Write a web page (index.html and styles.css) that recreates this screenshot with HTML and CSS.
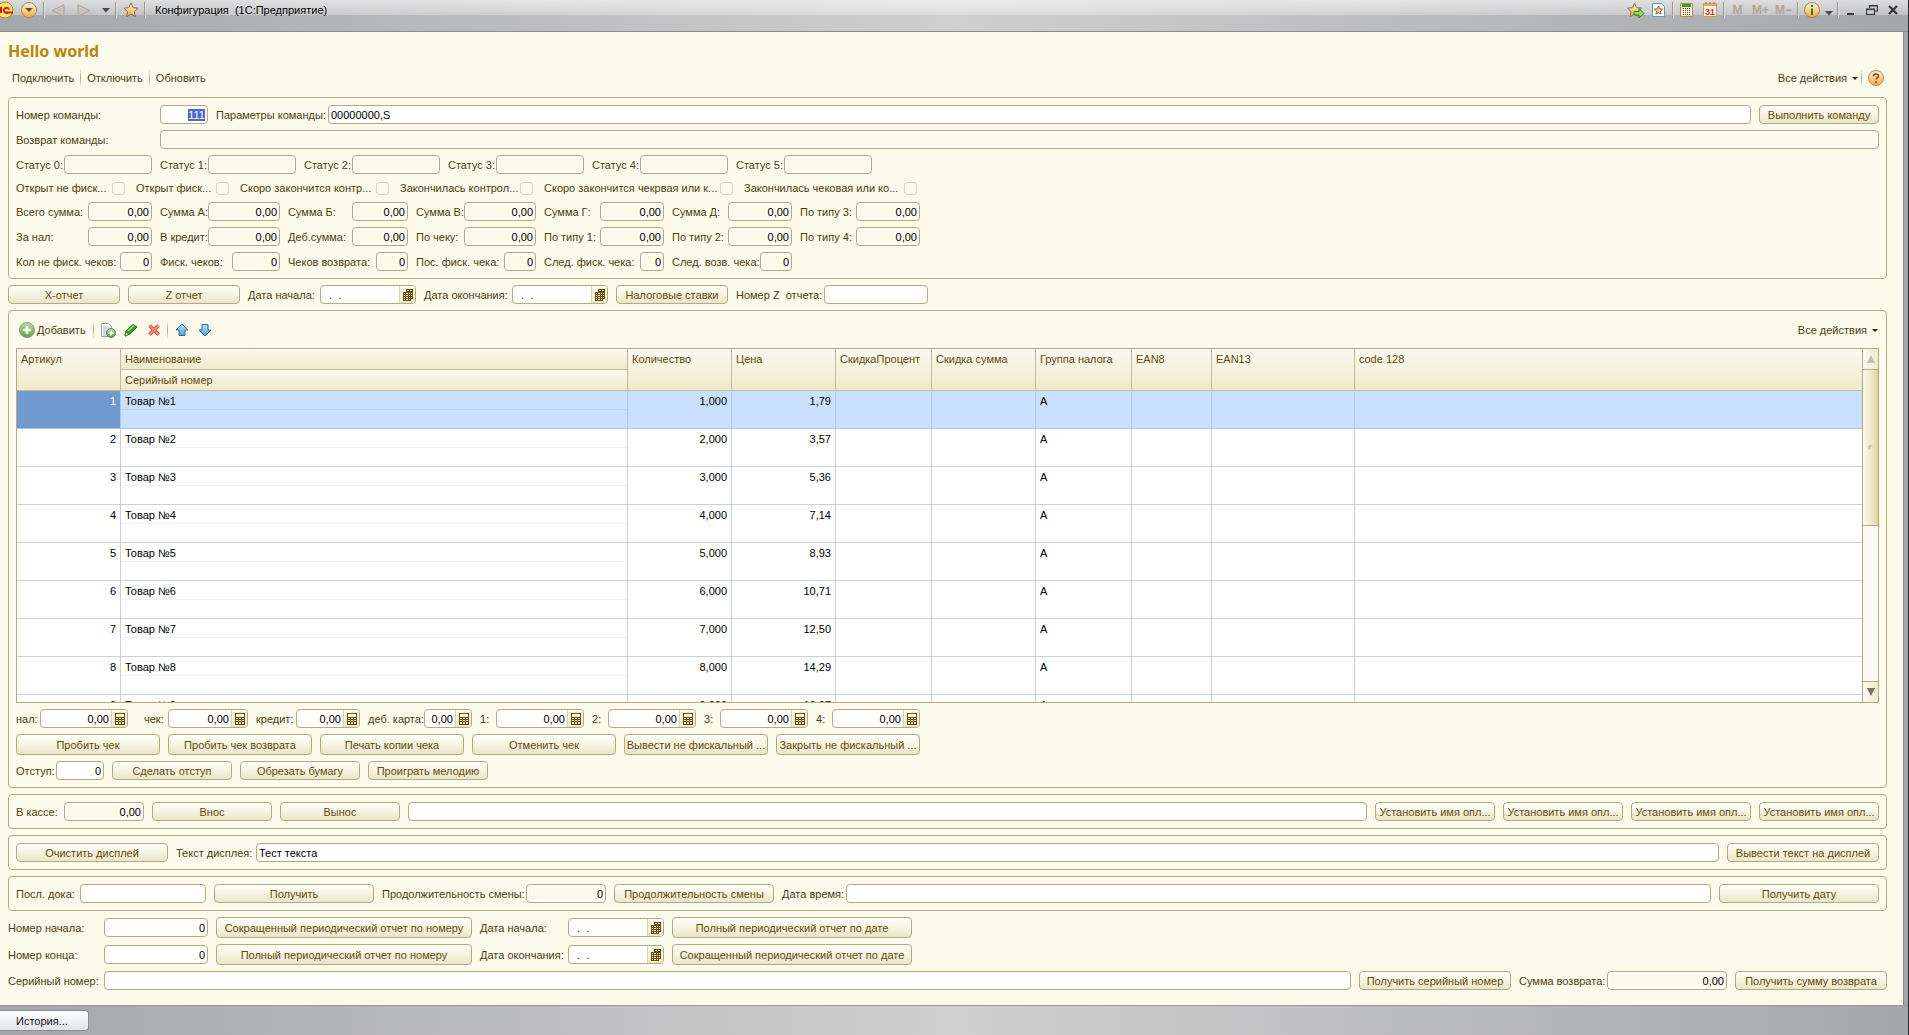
FILE: index.html
```
<!DOCTYPE html>
<html lang="ru">
<head>
<meta charset="utf-8">
<title>Конфигурация (1С:Предприятие)</title>
<link rel="stylesheet" href="styles.css">
</head>
<body>
<svg class="defs" aria-hidden="true">
  <defs>
    <linearGradient id="gold" x1="0" y1="0" x2="0" y2="1"><stop offset="0" stop-color="#fff3dc"/><stop offset=".5" stop-color="#fbd08a"/><stop offset="1" stop-color="#f3a63c"/></linearGradient>
    <linearGradient id="green" x1="0" y1="0" x2="0" y2="1"><stop offset="0" stop-color="#b9dcab"/><stop offset="1" stop-color="#5ea04a"/></linearGradient>
    <linearGradient id="blue" x1="0" y1="0" x2="0" y2="1"><stop offset="0" stop-color="#b8e0fa"/><stop offset="1" stop-color="#4fa3e0"/></linearGradient>
    <symbol id="i-star" viewBox="0 0 16 16"><path d="M8 1l2.100 4.600 5 .6-3.700 3.400 1 5L8 12.200l-4.400 2.400 1-5L.9 6.200l5-.6z" fill="url(#gold)" stroke="#8a7552"/></symbol>
    <symbol id="i-dates" viewBox="0 0 10 12"><path d="M3 0h7v10H8v2H0V3h3z" fill="#6a500a"/><path d="M1 4h1v1H1zM3 4h2v1H3zM6 4h1v1H6zM1 6h1v1H1zM3 6h2v1H3zM6 6h1v1H6zM1 8h1v1H1zM3 8h2v1H3zM6 8h1v1H6zM1 10h1v1H1zM3 10h2v1H3zM6 10h1v1H6zM4 1h2v1H4zM7 1h2v1H7zM8 4h1v1H8zM8 6h1v1H8zM8 8h1v1H8z" fill="#f7f1d6"/></symbol>
    <symbol id="i-calc" viewBox="0 0 10 12"><path d="M0 0h10v12H0z" fill="#6a500a"/><path d="M1 1h8v3H1zM1 5h2v1H1zM4 5h2v1H4zM7 5h2v1H7zM1 7h2v1H1zM4 7h2v1H4zM7 7h2v1H7zM1 9h2v2H1zM4 9h2v2H4zM7 9h2v2H7z" fill="#f7f1d6"/></symbol>
  </defs>
</svg>

<header class="titlebar">
  <button class="tb-btn logo" aria-label="Главное меню"><svg width="14" height="18" viewBox="0 0 14 18"><circle cx="5" cy="9" r="8" fill="#ffe566" stroke="#a8863a"/><path d="M1 6v6M5 11.500H13M9 8.500A2.600 2.600 0 1 0 8.500 11" stroke="#d81a10" stroke-width="2" fill="none"/></svg></button>
  <button class="tb-btn drop" aria-label="Меню"><svg width="16" height="16" viewBox="0 0 16 16"><circle cx="8" cy="8" r="7.500" fill="url(#gold)" stroke="#a58a60"/><path d="M4 6h8l-4 4z" fill="#5e5348"/></svg></button>
  <span class="tb-sep"></span>
  <button class="tb-btn nav" aria-label="Назад"><svg width="14" height="13" viewBox="0 0 14 13"><path d="M13 .8v11.400L1 6.500z" fill="#cac4bc" stroke="#aaa59f"/></svg></button>
  <button class="tb-btn nav" aria-label="Вперед"><svg width="14" height="13" viewBox="0 0 14 13"><path d="M1 .8v11.400l12-5.700z" fill="#cac4bc" stroke="#aaa59f"/></svg></button>
  <button class="tb-btn hist" aria-label="Список переходов"><svg width="8" height="5" viewBox="0 0 8 5"><path d="M0 0h8L4 4.500z" fill="#4a4a4e"/></svg></button>
  <span class="tb-sep"></span>
  <button class="tb-btn fav" aria-label="Избранное"><svg width="16" height="16"><use href="#i-star"/></svg></button>
  <span class="tb-sep"></span>
  <span class="tb-title">Конфигурация&nbsp; (1С:Предприятие)</span>
  <div class="tb-right">
    <button class="tb-btn" aria-label="Добавить в избранное"><svg width="18" height="17" viewBox="0 0 18 17"><path d="M7.500 1l2 4.600 5 .6-3.700 3.400 1 5-4.300-2.400-4.400 2.400 1-5L.6 6.200l5-.6z" fill="url(#gold)" stroke="#8a7552"/><path d="M7 9.500h5v-3l5 5-5 4.500v-3H7z" fill="#8fdc5c" stroke="#2f8420"/></svg></button>
    <button class="tb-btn" aria-label="Страница избранного"><svg width="13" height="16" viewBox="0 0 13 16"><path d="M.5 1.500h9l3 3v10H.5z" fill="#fff" stroke="#6f92b8"/><path d="M6.500 4l1.300 2.700 2.900.4-2.100 2 .5 3-2.600-1.400-2.600 1.400.5-3-2.100-2 2.900-.4z" fill="#f5bd66" stroke="#5b5b55" stroke-width=".8"/></svg></button>
    <span class="tb-sep"></span>
    <button class="tb-btn" aria-label="Калькулятор"><svg width="13" height="16" viewBox="0 0 13 16"><path d="M.5 1.500h12v13H.5z" fill="#fdf0cf" stroke="#b78a4c"/><path d="M2 2h9v3H2z" fill="#3f9a35"/><path d="M3 6h1v1H3zM5 6h1v1H5zM7 6h1v1H7zM9 6h1v1H9zM3 8h1v1H3zM5 8h1v1H5zM7 8h1v1H7zM9 8h1v1H9zM3 10h1v1H3zM5 10h1v1H5zM7 10h1v1H7zM9 10h1v1H9zM3 12h1v1H3zM5 12h1v1H5zM7 12h1v1H7z" fill="#5e5138"/><path d="M9 12h1v1H9z" fill="#d83020"/></svg></button>
    <button class="tb-btn" aria-label="Календарь"><svg width="14" height="16" viewBox="0 0 14 16"><path d="M.5 1.500h13v13H.5z" fill="#fff4e4" stroke="#c79a62"/><path d="M1 1h12v3H1z" fill="#eda765"/><path d="M3 0v2M7 0v2M11 0v2" stroke="#8b5a2b"/><text x="7" y="13" text-anchor="middle" class="cal-num">31</text></svg></button>
    <span class="tb-sep"></span>
    <button class="tb-btn mem">M</button>
    <button class="tb-btn mem">M+</button>
    <button class="tb-btn mem">M−</button>
    <span class="tb-sep"></span>
    <button class="tb-btn" aria-label="О программе"><svg width="16" height="16" viewBox="0 0 16 16"><circle cx="8" cy="8" r="7.500" fill="url(#gold)" stroke="#9a8058"/><path d="M7 3h2v2H7zM7 6.500h2V13H7z" fill="#2f7d23"/></svg></button>
    <button class="tb-btn low" aria-label="Еще"><svg width="8" height="5" viewBox="0 0 8 5"><path d="M0 0h8L4 4.500z" fill="#4a4a4e"/></svg></button>
    <span class="tb-sep"></span>
    <button class="tb-btn win" aria-label="Свернуть"><svg width="12" height="12" viewBox="0 0 12 12"><path d="M2 9h7v2H2z" fill="#38383a"/></svg></button>
    <button class="tb-btn win" aria-label="Восстановить"><svg width="12" height="12" viewBox="0 0 12 12"><path d="M3.500 4V1.500h8v5.500H9M.5 5h8v5.500h-8zM3 2h9M0 5.500h9" fill="none" stroke="#38383a" stroke-width="1.200"/></svg></button>
    <button class="tb-btn win" aria-label="Закрыть"><svg width="12" height="12" viewBox="0 0 12 12"><path d="M2 2l8 8M10 2l-8 8" stroke="#333" stroke-width="2.200"/></svg></button>
  </div>
</header>

<main class="page">
  <h1>Hello world</h1>
  <nav class="menu">
    <button class="link">Подключить</button><span class="sep"></span>
    <button class="link">Отключить</button><span class="sep"></span>
    <button class="link">Обновить</button>
    <div class="menu-right">
      <button class="link">Все действия <span class="caret"></span></button><span class="sep"></span>
      <button class="link help" aria-label="Справка"><svg width="16" height="16" viewBox="0 0 16 16"><circle cx="8" cy="8" r="7.500" fill="url(#gold)" stroke="#a58a60"/><path d="M5.500 6.500C5.500 3 10.500 3.200 10.500 6c0 1.600-2.500 1.600-2.500 3.500M8 11v2" stroke="#7a4a1c" stroke-width="1.500" fill="none"/></svg></button>
    </div>
  </nav>

  <section class="box">
    <div class="row">
      <label class="field"><span class="c144">Номер команды:</span><input id="cmd" class="w48 num" value="111"></label>
      <label class="field grow"><span class="c112">Параметры команды:</span><input class="fill" value="00000000,S"></label>
      <button class="btn w120">Выполнить команду</button>
    </div>
    <div class="row">
      <label class="field grow"><span class="c144">Возврат команды:</span><input class="fill" readonly></label>
    </div>
    <div class="row">
      <label class="field"><span class="c48">Статус 0:</span><input class="w88" readonly></label>
      <label class="field"><span class="c48">Статус 1:</span><input class="w88" readonly></label>
      <label class="field"><span class="c48">Статус 2:</span><input class="w88" readonly></label>
      <label class="field"><span class="c48">Статус 3:</span><input class="w88" readonly></label>
      <label class="field"><span class="c48">Статус 4:</span><input class="w88" readonly></label>
      <label class="field"><span class="c48">Статус 5:</span><input class="w88" readonly></label>
    </div>
    <div class="checks">
      <label>Открыт не фиск...<input type="checkbox" disabled></label>
      <label>Открыт фиск...<input type="checkbox" disabled></label>
      <label>Скоро закончится контр...<input type="checkbox" disabled></label>
      <label>Закончилась контрол...<input type="checkbox" disabled></label>
      <label>Скоро закончится чекрвая или к...<input type="checkbox" disabled></label>
      <label>Закончилась чековая или ко...<input type="checkbox" disabled></label>
    </div>
    <div class="sums">
      <label>Всего сумма:<input class="w64 num" value="0,00" readonly></label>
      <label>Сумма А:<input class="w72 num" value="0,00" readonly></label>
      <label>Сумма Б:<input class="w56 num" value="0,00" readonly></label>
      <label>Сумма В:<input class="w72 num" value="0,00" readonly></label>
      <label>Сумма Г:<input class="w64 num" value="0,00" readonly></label>
      <label>Сумма Д:<input class="w64 num" value="0,00" readonly></label>
      <label>По типу 3:<input class="w64 num" value="0,00" readonly></label>
      <label>За нал:<input class="w64 num" value="0,00" readonly></label>
      <label>В кредит:<input class="w72 num" value="0,00" readonly></label>
      <label>Деб.сумма:<input class="w56 num" value="0,00" readonly></label>
      <label>По чеку:<input class="w72 num" value="0,00" readonly></label>
      <label>По типу 1:<input class="w64 num" value="0,00" readonly></label>
      <label>По типу 2:<input class="w64 num" value="0,00" readonly></label>
      <label>По типу 4:<input class="w64 num" value="0,00" readonly></label>
      <label>Кол не фиск. чеков:<input class="w32 num" value="0" readonly></label>
      <label>Фиск. чеков:<input class="w48 num" value="0" readonly></label>
      <label>Чеков возврата:<input class="w32 num" value="0" readonly></label>
      <label>Пос. фиск. чека:<input class="w32 num" value="0" readonly></label>
      <label>След. фиск. чека:<input class="w24 num" value="0" readonly></label>
      <label>След. возв. чека:<input class="w32 num" value="0" readonly></label>
    </div>
  </section>

  <div class="row">
    <button class="btn w112">X-отчет</button>
    <button class="btn w112">Z отчет</button>
    <div class="field"><label class="c72" for="d1">Дата начала:</label><div class="combo w96"><input id="d1" value="  .  ."><button aria-label="Выбрать дату"><svg width="10" height="12"><use href="#i-dates"/></svg></button></div></div>
    <div class="field"><label class="c88" for="d2">Дата окончания:</label><div class="combo w96"><input id="d2" value="  .  ."><button aria-label="Выбрать дату"><svg width="10" height="12"><use href="#i-dates"/></svg></button></div></div>
    <button class="btn w112">Налоговые ставки</button>
    <label class="field"><span class="c88">Номер Z&nbsp; отчета:</span><input class="w104"></label>
  </div>

  <section class="box">
    <div class="toolbar">
      <button class="link add"><svg width="16" height="16" viewBox="0 0 16 16"><circle cx="8" cy="8" r="7.500" fill="url(#green)" stroke="#8a9a80"/><path d="M8 4v8M4 8h8" stroke="#fff" stroke-width="2.400"/></svg>Добавить</button>
      <span class="sep"></span>
      <button class="icon" aria-label="Скопировать"><svg width="16" height="16" viewBox="0 0 16 16"><path d="M1.500 1.500h7l3 3v10h-10z" fill="#fff" stroke="#8aa0b4"/><path d="M3 5h6M3 7h6M3 9h4M3 11h3M3 13h3" stroke="#9db3c8"/><circle cx="11" cy="11" r="4.500" fill="url(#green)" stroke="#5f8a50"/><path d="M11 8.500v5M8.500 11h5" stroke="#fff" stroke-width="1.600"/></svg></button>
      <button class="icon" aria-label="Изменить"><svg width="14" height="14" viewBox="0 0 14 14"><path d="M1 13l1-5L9 1.500l4 2.500-7 7z" fill="#2fa51a" stroke="#1d7a12"/><path d="M4 8l6-5.500" stroke="#8fe070" stroke-width="1.500"/><path d="M1 13l1-4 3 2.500z" fill="#e9dca0" stroke="#3b5a20" stroke-width=".6"/></svg></button>
      <button class="icon" aria-label="Удалить"><svg width="14" height="14" viewBox="0 0 14 14"><path d="M2.500 2.500l9 9M11.500 2.500l-9 9" stroke="#d4483a" stroke-width="3.600"/><path d="M2.500 2.500l9 9M11.500 2.500l-9 9" stroke="#f4897c" stroke-width="1.800"/></svg></button>
      <span class="sep"></span>
      <button class="icon" aria-label="Вверх"><svg width="14" height="14" viewBox="0 0 14 14"><path d="M7 1l6 6h-3v5.500H4V7H1z" fill="url(#blue)" stroke="#33688f"/></svg></button>
      <button class="icon" aria-label="Вниз"><svg width="14" height="14" viewBox="0 0 14 14"><path d="M7 13l6-6h-3V1.500H4V7H1z" fill="url(#blue)" stroke="#33688f"/></svg></button>
      <button class="link all">Все действия <span class="caret"></span></button>
    </div>

    <div class="list">
      <div class="list-view">
        <table>
          <colgroup><col class="k-w104"><col class="k-name"><col class="k-w104"><col class="k-w104"><col class="k-w96"><col class="k-w104"><col class="k-w96"><col class="k-w80"><col class="k-w143"><col></colgroup>
          <thead>
            <tr><th rowspan="2">Артикул</th><th>Наименование</th><th rowspan="2">Количество</th><th rowspan="2">Цена</th><th rowspan="2">СкидкаПроцент</th><th rowspan="2">Скидка сумма</th><th rowspan="2">Группа налога</th><th rowspan="2">EAN8</th><th rowspan="2">EAN13</th><th rowspan="2">code 128</th></tr>
            <tr><th>Серийный номер</th></tr>
          </thead>
          <tbody>
            <tr class="sel"><td>1</td><td><div>Товар №1</div></td><td>1,000</td><td>1,79</td><td></td><td></td><td>А</td><td></td><td></td><td></td></tr>
            <tr><td>2</td><td><div>Товар №2</div></td><td>2,000</td><td>3,57</td><td></td><td></td><td>А</td><td></td><td></td><td></td></tr>
            <tr><td>3</td><td><div>Товар №3</div></td><td>3,000</td><td>5,36</td><td></td><td></td><td>А</td><td></td><td></td><td></td></tr>
            <tr><td>4</td><td><div>Товар №4</div></td><td>4,000</td><td>7,14</td><td></td><td></td><td>А</td><td></td><td></td><td></td></tr>
            <tr><td>5</td><td><div>Товар №5</div></td><td>5,000</td><td>8,93</td><td></td><td></td><td>А</td><td></td><td></td><td></td></tr>
            <tr><td>6</td><td><div>Товар №6</div></td><td>6,000</td><td>10,71</td><td></td><td></td><td>А</td><td></td><td></td><td></td></tr>
            <tr><td>7</td><td><div>Товар №7</div></td><td>7,000</td><td>12,50</td><td></td><td></td><td>А</td><td></td><td></td><td></td></tr>
            <tr><td>8</td><td><div>Товар №8</div></td><td>8,000</td><td>14,29</td><td></td><td></td><td>А</td><td></td><td></td><td></td></tr>
            <tr><td>9</td><td><div>Товар №9</div></td><td>9,000</td><td>16,07</td><td></td><td></td><td>А</td><td></td><td></td><td></td></tr>
          </tbody>
        </table>
      </div>
      <div class="scroll">
        <button class="up" aria-label="Прокрутить вверх"><svg width="8" height="8" viewBox="0 0 8 8"><path d="M4 0l4 8H0z" fill="#c3bfb4"/></svg></button>
        <div class="thumb"><i></i></div>
        <div class="track"></div>
        <button class="down" aria-label="Прокрутить вниз"><svg width="8" height="8" viewBox="0 0 8 8"><path d="M4 8l4-8H0z" fill="#77736c"/></svg></button>
      </div>
    </div>

    <div class="row">
      <div class="field"><label class="c24" for="p1">нал:</label><div class="combo w88"><input id="p1" class="num" value="0,00"><button aria-label="Калькулятор"><svg width="10" height="12"><use href="#i-calc"/></svg></button></div></div>
      <div class="field lead"><label class="c24" for="p2">чек:</label><div class="combo w80"><input id="p2" class="num" value="0,00"><button aria-label="Калькулятор"><svg width="10" height="12"><use href="#i-calc"/></svg></button></div></div>
      <div class="field"><label class="c40" for="p3">кредит:</label><div class="combo w64"><input id="p3" class="num" value="0,00"><button aria-label="Калькулятор"><svg width="10" height="12"><use href="#i-calc"/></svg></button></div></div>
      <div class="field"><label class="c56" for="p4">деб. карта:</label><div class="combo w48"><input id="p4" class="num" value="0,00"><button aria-label="Калькулятор"><svg width="10" height="12"><use href="#i-calc"/></svg></button></div></div>
      <div class="field"><label class="c16" for="p5">1:</label><div class="combo w88"><input id="p5" class="num" value="0,00"><button aria-label="Калькулятор"><svg width="10" height="12"><use href="#i-calc"/></svg></button></div></div>
      <div class="field"><label class="c16" for="p6">2:</label><div class="combo w88"><input id="p6" class="num" value="0,00"><button aria-label="Калькулятор"><svg width="10" height="12"><use href="#i-calc"/></svg></button></div></div>
      <div class="field"><label class="c16" for="p7">3:</label><div class="combo w88"><input id="p7" class="num" value="0,00"><button aria-label="Калькулятор"><svg width="10" height="12"><use href="#i-calc"/></svg></button></div></div>
      <div class="field"><label class="c16" for="p8">4:</label><div class="combo w88"><input id="p8" class="num" value="0,00"><button aria-label="Калькулятор"><svg width="10" height="12"><use href="#i-calc"/></svg></button></div></div>
    </div>
    <div class="row tall">
      <button class="btn w144">Пробить чек</button>
      <button class="btn w144">Пробить чек возврата</button>
      <button class="btn w144">Печать копии чека</button>
      <button class="btn w144">Отменить чек</button>
      <button class="btn w144">Вывести не фискальный ...</button>
      <button class="btn w144">Закрыть не фискальный ...</button>
    </div>
    <div class="row">
      <label class="field"><span class="c40">Отступ:</span><input class="w48 num" value="0"></label>
      <button class="btn w120">Сделать отступ</button>
      <button class="btn w120">Обрезать бумагу</button>
      <button class="btn w120">Проиграть мелодию</button>
    </div>
  </section>

  <section class="box">
    <div class="row">
      <label class="field"><span class="c48">В кассе:</span><input class="w80 num" value="0,00" readonly></label>
      <button class="btn w120">Внос</button>
      <button class="btn w120">Вынос</button>
      <input class="fill" aria-label="Имя оплаты">
      <button class="btn w120">Установить имя опл...</button>
      <button class="btn w120">Установить имя опл...</button>
      <button class="btn w120">Установить имя опл...</button>
      <button class="btn w120">Установить имя опл...</button>
    </div>
  </section>

  <section class="box">
    <div class="row">
      <button class="btn w152">Очистить дисплей</button>
      <label class="field grow"><span class="c80">Текст дисплея:</span><input class="fill" value="Тест текста"></label>
      <button class="btn w152">Вывести текст на дисплей</button>
    </div>
  </section>

  <section class="box">
    <div class="row">
      <label class="field"><span class="c64">Посл. дока:</span><input class="w126"></label>
      <button class="btn w160">Получить</button>
      <label class="field"><span class="c144">Продолжительность смены:</span><input class="w80 num" value="0" readonly></label>
      <button class="btn w160">Продолжительность смены</button>
      <label class="field grow"><span class="c64">Дата время:</span><input class="fill"></label>
      <button class="btn w160">Получить дату</button>
    </div>
  </section>

  <div class="row tall">
    <label class="field"><span class="c96">Номер начала:</span><input class="w104 num" value="0"></label>
    <button class="btn w256">Сокращенный периодический отчет по номеру</button>
    <div class="field"><label class="c88" for="d3">Дата начала:</label><div class="combo w96"><input id="d3" value="  .  ."><button aria-label="Выбрать дату"><svg width="10" height="12"><use href="#i-dates"/></svg></button></div></div>
    <button class="btn w240">Полный периодический отчет по дате</button>
  </div>
  <div class="row tall">
    <label class="field"><span class="c96">Номер конца:</span><input class="w104 num" value="0"></label>
    <button class="btn w256">Полный периодический отчет по номеру</button>
    <div class="field"><label class="c88" for="d4">Дата окончания:</label><div class="combo w96"><input id="d4" value="  .  ."><button aria-label="Выбрать дату"><svg width="10" height="12"><use href="#i-dates"/></svg></button></div></div>
    <button class="btn w240">Сокращенный периодический отчет по дате</button>
  </div>
  <div class="row">
    <label class="field grow"><span class="c96">Серийный номер:</span><input class="fill"></label>
    <button class="btn w152">Получить серийный номер</button>
    <label class="field"><span class="c88">Сумма возврата:</span><input class="w120 num" value="0,00" readonly></label>
    <button class="btn w152">Получить сумму возврата</button>
  </div>
</main>

<footer class="status"><button class="history">История...</button></footer>
<script>
const cmd = document.getElementById('cmd');
cmd.focus();
cmd.select();
</script>
</body>
</html>
```
FILE: styles.css
```
:root {
  --line: #b4aa80;
  --page: #fcfaeb;
  --label: #4b3c14;
  --brown: #624b0b;
}
* { box-sizing: border-box; }
body {
  margin: 0;
  min-height: 100vh;
  display: flex;
  flex-direction: column;
  font: 11px/16px "Liberation Sans", Arial, sans-serif;
  color: var(--label);
  background: linear-gradient(90deg, #a6a7ab, #cfcfcf 50%, #a6a7ab);
  border-right: 1px solid #26262a;
}
button, input { font: inherit; color: inherit; margin: 0; }
button { padding: 0; border: 0; background: none; white-space: nowrap; }
svg { display: block; flex: none; }
.defs { position: absolute; width: 0; height: 0; }

/* Window title bar */
.titlebar {
  height: 32px;
  padding-bottom: 11px;
  display: flex;
  align-items: center;
  border-bottom: 1px solid #8b8c90;
  background: linear-gradient(rgba(255,255,255,.6), rgba(255,255,255,.3) 15px, transparent 15px);
}
.tb-btn { height: 20px; display: flex; align-items: center; justify-content: center; }
.tb-sep { width: 2px; height: 16px; border-left: 1px solid #98989b; border-right: 1px solid #dedede; flex: none; }
.logo { width: 14px; }
.drop { width: 29px; }
.nav { width: 26px; }
.hist { width: 18px; }
.fav { width: 27px; }
.tb-title { color: #000; padding-left: 9px; }
.tb-right { margin-left: auto; display: flex; align-items: center; padding-right: 5px; }
.tb-right .tb-btn { width: 23px; }
.tb-right .tb-sep { margin: 0 1px 0 2px; }
.mem { font: bold 12px/16px "Liberation Sans", Arial, sans-serif; color: #b3a49a; }
.cal-num { font: bold 9px "Liberation Sans", Arial, sans-serif; fill: #e0301e; }
.tb-right .low { width: 12px; align-items: flex-end; padding-bottom: 4px; }
.tb-right .win { width: 21px; }

/* Form page */
.page {
  flex: 1;
  margin-right: 4px;
  padding: 8px 16px 15px 8px;
  background: var(--page);
  border-right: 1px solid #8b8c90;
  display: flex;
  flex-direction: column;
  gap: 6px;
}
h1 { margin: 0; font: bold 16px/22px "Noto Sans", sans-serif; color: #b8860b; }
.menu { display: flex; align-items: center; height: 20px; padding-left: 4px; margin-bottom: 3px; }
.menu-right { margin-left: auto; display: flex; align-items: center; padding-right: 3px; }
.link { display: flex; align-items: center; }
.sep { width: 1px; height: 18px; margin: 0 6px; background: linear-gradient(transparent, #a9a588, transparent); }
.menu-right .sep { margin-left: 3px; }
.caret { border: solid transparent; border-width: 3px 3px 0; border-top-color: #2d2408; margin-left: 5px; }
.box { border: 1px solid var(--line); border-radius: 4px; padding: 7px; display: flex; flex-direction: column; gap: 6px; }
.row { display: flex; align-items: center; gap: 8px; }
.field { display: flex; align-items: center; white-space: nowrap; }
.field > span, .field > label { flex: none; }
.grow { flex: 1; min-width: 0; }
.lead { margin-left: 8px; }

input:not([type]) {
  height: 19px;
  flex: none;
  padding: 0 2px;
  color: #000;
  background: #fff;
  border: 1px solid var(--line);
  border-radius: 4px;
  outline: 0;
}
input[readonly]:not([type]) { background: var(--page); box-shadow: inset 0 0 0 2px #fff; }
input.fill:not([type]) { flex: 1; min-width: 0; }
.num { text-align: right; }
::selection { background: #5069c6; color: #fff; }

.btn {
  height: 19px;
  flex: none;
  overflow: hidden;
  text-align: center;
  color: var(--brown);
  border: 1px solid var(--line);
  border-radius: 4px;
  background: linear-gradient(#fffefa, #f6f3e0 50%, #eae5ca);
}
.tall .btn { height: 21px; }

.combo { display: flex; height: 19px; border: 1px solid var(--line); border-radius: 4px; background: #fff; overflow: hidden; }
.combo input:not([type]) { flex: 1; min-width: 0; height: 17px; border: 0; white-space: pre; background: none; }
.combo button { width: 16px; flex: none; display: flex; align-items: center; justify-content: center; border-left: 1px solid #d8d1ae; background: linear-gradient(#fdfbf0, #eee8cb); }

.checks { display: grid; grid-template-columns: 110px 94px 150px 134px 190px 174px; gap: 10px; }
.checks label { display: flex; align-items: center; justify-content: space-between; height: 16px; white-space: nowrap; }
.checks input { appearance: none; width: 13px; height: 13px; flex: none; margin: 0 1px 0 0; border: 1px solid #dcd6ba; border-radius: 3px; background: #fdfbf0; }
.sums { display: grid; grid-template-columns: 136px repeat(6, 120px); gap: 6px 8px; }
.sums label { display: flex; align-items: center; justify-content: space-between; white-space: nowrap; }

/* Goods list */
.toolbar { display: flex; align-items: center; height: 24px; padding: 0 1px 0 3px; }
.add { gap: 2px; }
.icon { width: 23px; display: flex; justify-content: center; }
.toolbar .sep { margin: 0 3px 0 1px; }
.toolbar .add + .sep { margin-left: 7px; }
.toolbar .all { margin-left: auto; }
.list { display: flex; height: 355px; border: 1px solid var(--line); background: #fff; }
.list-view { flex: 1; min-width: 0; overflow: hidden; }
table { width: 100%; table-layout: fixed; border-collapse: separate; border-spacing: 0; }
th, td { padding: 0 4px; text-align: left; vertical-align: top; white-space: nowrap; overflow: hidden; }
th {
  height: 21px;
  line-height: 20px;
  font-weight: normal;
  color: var(--brown);
  border: solid #c6bb92;
  border-width: 0 1px 1px 0;
  background: linear-gradient(#fbf9f0, #f0e9cb);
}
td { height: 38px; line-height: 20px; color: #000; border: solid #c9d0d6; border-width: 0 1px 1px 0; }
th:last-child:not(:first-child), td:last-child { border-right: 0; }
td:nth-child(1), td:nth-child(3), td:nth-child(4) { text-align: right; }
td:nth-child(2) { padding: 0; }
td div { height: 19px; padding: 0 4px; border-bottom: 1px solid #eef0f1; }
.sel td { background: #c9e1ff; border-color: #adc9ea; }
.sel td div { border-color: #bad5f5; }
.sel td:first-child { background: #7099cf; color: #fff; }
.k-w104 { width: 104px; }
.k-name { width: 507px; }
.k-w96 { width: 96px; }
.k-w80 { width: 80px; }
.k-w143 { width: 143px; }
.scroll { width: 16px; flex: none; display: flex; flex-direction: column; border-left: 1px solid var(--line); background: #faf9f5; }
.scroll button { height: 21px; display: flex; align-items: center; justify-content: center; background: linear-gradient(90deg, #fcfaf2, #efe9cd); }
.scroll .up, .thumb { border-bottom: 1px solid var(--line); }
.scroll .down { border-top: 1px solid var(--line); }
.thumb { height: 156px; display: flex; align-items: center; justify-content: center; background: linear-gradient(90deg, #fbf9f0, #efe8c6 60%, #dcd3a4); }
.thumb i { width: 5px; height: 5px; border-radius: 50%; background: linear-gradient(135deg, #bdb48c, #f7f3de); }
.track { flex: 1; }

/* Label columns */
.c16 { width: 16px; } .c24 { width: 24px; } .c40 { width: 40px; } .c48 { width: 48px; }
.c56 { width: 56px; } .c64 { width: 64px; } .c72 { width: 72px; } .c80 { width: 80px; }
.c88 { width: 88px; } .c96 { width: 96px; } .c112 { width: 112px; } .c144 { width: 144px; }

/* Control widths */
.w24 { width: 24px; } .w32 { width: 32px; } .w48 { width: 48px; } .w56 { width: 56px; }
.w64 { width: 64px; } .w72 { width: 72px; } .w80 { width: 80px; } .w88 { width: 88px; }
.w96 { width: 96px; } .w104 { width: 104px; } .w112 { width: 112px; } .w120 { width: 120px; }
.w126 { width: 126px; } .w144 { width: 144px; } .w152 { width: 152px; } .w160 { width: 160px; }
.w240 { width: 240px; } .w256 { width: 256px; }

/* Bottom strip */
.status { height: 30px; padding-top: 4px; border-top: 1px solid #96979a; }
.history { width: 89px; height: 21px; display: block; color: #111; border: 1px solid #8b8c90; border-left: 0; border-radius: 0 4px 4px 0; background: linear-gradient(#fff, #e3e4e6); text-align: left; padding-left: 16px; }
```
